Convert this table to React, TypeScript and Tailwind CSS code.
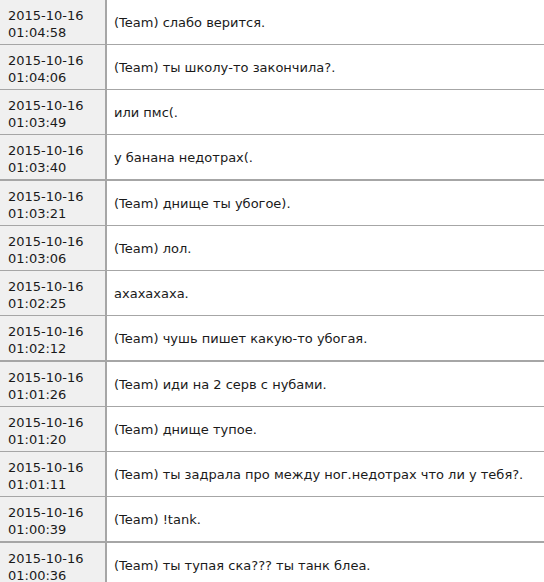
import React from "react";

const rows: [string, string, string][] = [
  ["2015-10-16", "01:04:58", "(Team) слабо верится."],
  ["2015-10-16", "01:04:06", "(Team) ты школу-то закончила?."],
  ["2015-10-16", "01:03:49", "или пмс(."],
  ["2015-10-16", "01:03:40", "у банана недотрах(."],
  ["2015-10-16", "01:03:21", "(Team) днище ты убогое)."],
  ["2015-10-16", "01:03:06", "(Team) лол."],
  ["2015-10-16", "01:02:25", "ахахахаха."],
  ["2015-10-16", "01:02:12", "(Team) чушь пишет какую-то убогая."],
  ["2015-10-16", "01:01:26", "(Team) иди на 2 серв с нубами."],
  ["2015-10-16", "01:01:20", "(Team) днище тупое."],
  ["2015-10-16", "01:01:11", "(Team) ты задрала про между ног.недотрах что ли у тебя?."],
  ["2015-10-16", "01:00:39", "(Team) !tank."],
  ["2015-10-16", "01:00:36", "(Team) ты тупая ска??? ты танк блеа."],
];

export default function App() {
  return (
    <div
      className="w-[544px] h-[582px] overflow-hidden bg-white text-[13px] leading-[17px] text-[#1a1a1a]"
      style={{ fontFamily: '"DejaVu Sans", Verdana, sans-serif' }}
    >
      <div className="-mt-[2px] flex flex-col">
        {rows.map((r, i) => (
          <div
            key={i}
            className={
              "flex border-[#a6a6a6] " +
              (i % 4 === 0 ? "border-t-2" : "border-t")
            }
          >
            <div className="w-[107px] shrink-0 bg-[#f0f0f0] border-r-2 border-[#a6a6a6] pl-[8px] pt-[7px] pb-[3px]">
              <div>{r[0]}</div>
              <div>{r[1]}</div>
            </div>
            <div className="flex-1 flex items-center pl-[7px]">{r[2]}</div>
          </div>
        ))}
      </div>
    </div>
  );
}
